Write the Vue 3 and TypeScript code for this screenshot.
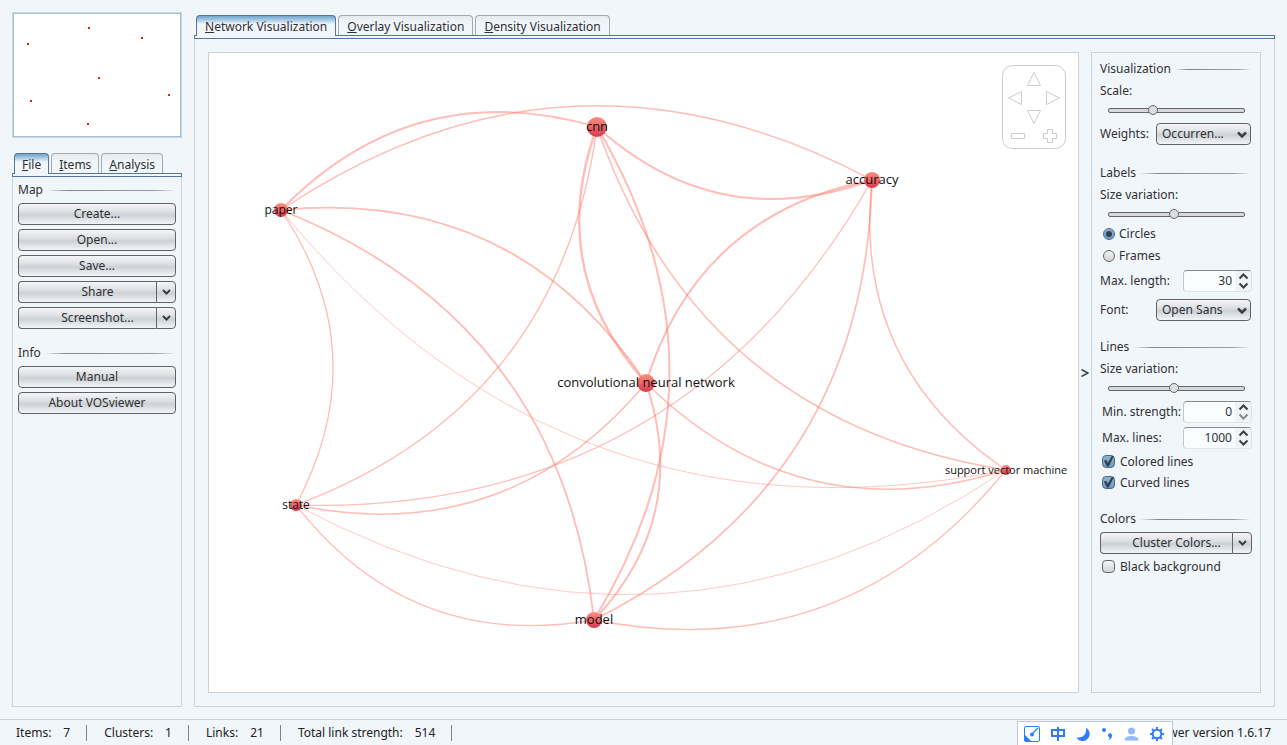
<script setup lang="ts">
import { ref } from 'vue'

interface MapNode { id: string; label: string; x: number; y: number; r: number; size: number }
interface MapLink { from: string; to: string; width: number }

const nodes: MapNode[] = [
  { id: 'paper', label: 'paper', x: 72, y: 157, r: 7, size: 12 },
  { id: 'state', label: 'state', x: 87, y: 452, r: 6, size: 12 },
  { id: 'svm', label: 'support vector machine', x: 797, y: 417, r: 5, size: 11 },
  { id: 'accuracy', label: 'accuracy', x: 663, y: 127, r: 8, size: 13 },
  { id: 'model', label: 'model', x: 385, y: 567, r: 8, size: 13 },
  { id: 'conv', label: 'convolutional neural network', x: 437, y: 330, r: 9, size: 13 },
  { id: 'cnn', label: 'cnn', x: 388, y: 74, r: 10, size: 13 },
]

const links: MapLink[] = [
  { from: 'paper', to: 'cnn', width: 1.8 },
  { from: 'paper', to: 'accuracy', width: 1.4 },
  { from: 'paper', to: 'state', width: 1.3 },
  { from: 'paper', to: 'conv', width: 1.8 },
  { from: 'paper', to: 'model', width: 1.8 },
  { from: 'svm', to: 'paper', width: 0.8 },
  { from: 'accuracy', to: 'cnn', width: 2 },
  { from: 'conv', to: 'cnn', width: 2.4 },
  { from: 'cnn', to: 'state', width: 1.4 },
  { from: 'cnn', to: 'model', width: 2 },
  { from: 'svm', to: 'cnn', width: 1.5 },
  { from: 'conv', to: 'accuracy', width: 2 },
  { from: 'accuracy', to: 'state', width: 1.2 },
  { from: 'accuracy', to: 'model', width: 1.7 },
  { from: 'svm', to: 'accuracy', width: 1.5 },
  { from: 'conv', to: 'state', width: 1.5 },
  { from: 'svm', to: 'conv', width: 1.6 },
  { from: 'conv', to: 'model', width: 2 },
  { from: 'model', to: 'state', width: 1.3 },
  { from: 'svm', to: 'state', width: 0.8 },
  { from: 'svm', to: 'model', width: 1.3 },
]

const byId = new Map(nodes.map((n) => [n.id, n]))

// Each link bows to the left of its direction of travel.
function curve(link: MapLink): string {
  const a = byId.get(link.from)!
  const b = byId.get(link.to)!
  const cx = (a.x + b.x) / 2 + 0.3 * (b.y - a.y)
  const cy = (a.y + b.y) / 2 - 0.3 * (b.x - a.x)
  return `M${a.x} ${a.y}Q${cx} ${cy} ${b.x} ${b.y}`
}

const overview = [
  [75, 14], [128, 24], [14, 30], [85, 64], [155, 81], [17, 87], [74, 110],
]

const mainTabs = ['Network Visualization', 'Overlay Visualization', 'Density Visualization']
const sideTabs = ['File', 'Items', 'Analysis']
const activeMain = ref(0)
const activeSide = ref(0)

const scale = ref(31)
const labelVariation = ref(48)
const lineVariation = ref(48)
const shape = ref('circles')
const maxLength = ref(30)
const minStrength = ref(0)
const maxLines = ref(1000)
const colored = ref(true)
const curved = ref(true)
const blackBackground = ref(false)

const stats = [
  ['Items:', '7'], ['Clusters:', '1'], ['Links:', '21'], ['Total link strength:', '514'],
]
</script>

<template>
  <div class="app">
    <div class="workspace">
      <aside class="side">
        <svg class="overview" viewBox="0 0 168 124" aria-label="Overview">
          <rect v-for="(p, i) in overview" :key="i" :x="p[0]" :y="p[1]" width="2" height="2" fill="#d22" />
        </svg>
        <div class="tabs side-tabs" role="tablist">
          <button v-for="(t, i) in sideTabs" :key="t" class="tab" :class="{ active: activeSide === i }" role="tab"
            :aria-selected="activeSide === i" @click="activeSide = i"><u>{{ t[0] }}</u>{{ t.slice(1) }}</button>
        </div>
        <div class="pane side-pane">
          <h2 class="heading">Map</h2>
          <div class="stack">
            <button class="btn">Create...</button>
            <button class="btn">Open...</button>
            <button class="btn">Save...</button>
            <div class="split">
              <button class="btn">Share</button>
              <button class="btn drop" aria-label="Share options">
                <svg width="9" height="6" viewBox="0 0 9 6"><path d="M1 1l3.5 3.5L8 1" /></svg>
              </button>
            </div>
            <div class="split">
              <button class="btn">Screenshot...</button>
              <button class="btn drop" aria-label="Screenshot options">
                <svg width="9" height="6" viewBox="0 0 9 6"><path d="M1 1l3.5 3.5L8 1" /></svg>
              </button>
            </div>
          </div>
          <h2 class="heading later">Info</h2>
          <div class="stack">
            <button class="btn">Manual</button>
            <button class="btn">About VOSviewer</button>
          </div>
        </div>
      </aside>

      <main class="main">
        <div class="tabs main-tabs" role="tablist">
          <button v-for="(t, i) in mainTabs" :key="t" class="tab" :class="{ active: activeMain === i }" role="tab"
            :aria-selected="activeMain === i" @click="activeMain = i"><u>{{ t[0] }}</u>{{ t.slice(1) }}</button>
        </div>
        <div class="pane main-pane">
          <section class="canvas">
            <svg class="map" viewBox="0 0 869 639">
              <defs>
                <linearGradient id="ball" x1="0" y1="0" x2="0" y2="1">
                  <stop offset="0" stop-color="#ff8f82" />
                  <stop offset="1" stop-color="#d63a4c" />
                </linearGradient>
              </defs>
              <path v-for="l in links" :key="l.from + l.to" class="link" :d="curve(l)" :stroke-width="l.width" />
              <circle v-for="n in nodes" :key="n.id" :cx="n.x" :cy="n.y" :r="n.r" fill="url(#ball)" />
              <text v-for="n in nodes" :key="n.id + 't'" class="label" :x="n.x" :y="n.y + 4" :font-size="n.size">{{ n.label }}</text>
            </svg>
            <svg class="navigator" width="64" height="84" viewBox="0 0 64 84" aria-label="Navigation">
              <rect x="0.5" y="0.5" width="63" height="83" rx="10" />
              <path d="M32 7.500L38.500 20.500H25.500Z" />
              <path d="M6.500 33L19.500 26.500V39.500Z" />
              <path d="M57.500 33L44.500 26.500V39.500Z" />
              <path d="M32 58.500L25.500 45.500H38.500Z" />
              <path d="M9.500 68.500H22.500V73.500H9.500Z" />
              <path d="M45.500 64.500H50.500V68.500H54.500V73.500H50.500V77.500H45.500V73.500H41.500V68.500H45.500Z" />
            </svg>
          </section>
          <button class="collapse" aria-label="Collapse options">
            <svg width="8" height="8" viewBox="0 0 8 8"><path d="M0.500 0.500L7 4L0.500 7.500" /></svg>
          </button>
          <section class="options">
            <h2 class="heading">Visualization</h2>
            <label class="line" for="scale">Scale:</label>
            <input id="scale" v-model="scale" class="slider" type="range" />
            <div class="row">
              <label for="weights">Weights:</label>
              <span class="select">
                <select id="weights"><option>Occurren...</option></select>
                <svg width="12" height="8" viewBox="0 0 12 8"><path d="M2 1.500L6 5.500L10 1.500" /></svg>
              </span>
            </div>

            <h2 class="heading labels-heading">Labels</h2>
            <label class="line" for="label-size">Size variation:</label>
            <input id="label-size" v-model="labelVariation" class="slider" type="range" />
            <label class="check radio"><input v-model="shape" type="radio" name="shape" value="circles" />Circles</label>
            <label class="check radio"><input v-model="shape" type="radio" name="shape" value="frames" />Frames</label>
            <div class="row length-row">
              <label for="max-length">Max. length:</label>
              <span class="spinner">
                <input id="max-length" v-model="maxLength" type="number" />
                <span class="steps">
                  <button aria-label="Increase length" @click="maxLength++"><svg width="11" height="7" viewBox="0 0 11 7"><path d="M1.500 5.500l4-4 4 4" /></svg></button>
                  <button aria-label="Decrease length" @click="maxLength--"><svg width="11" height="7" viewBox="0 0 11 7"><path d="M1.500 1.500l4 4 4-4" /></svg></button>
                </span>
              </span>
            </div>
            <div class="row font-row">
              <label for="font">Font:</label>
              <span class="select">
                <select id="font"><option>Open Sans</option></select>
                <svg width="12" height="8" viewBox="0 0 12 8"><path d="M2 1.500L6 5.500L10 1.500" /></svg>
              </span>
            </div>

            <h2 class="heading later">Lines</h2>
            <label class="line" for="line-size">Size variation:</label>
            <input id="line-size" v-model="lineVariation" class="slider" type="range" />
            <div class="row indent">
              <label for="min-strength">Min. strength:</label>
              <span class="spinner">
                <input id="min-strength" v-model="minStrength" type="number" />
                <span class="steps">
                  <button aria-label="Increase strength" @click="minStrength++"><svg width="11" height="7" viewBox="0 0 11 7"><path d="M1.500 5.500l4-4 4 4" /></svg></button>
                  <button aria-label="Decrease strength" :disabled="minStrength === 0" @click="minStrength--"><svg width="11" height="7" viewBox="0 0 11 7"><path d="M1.500 1.500l4 4 4-4" /></svg></button>
                </span>
              </span>
            </div>
            <div class="row indent">
              <label for="max-lines">Max. lines:</label>
              <span class="spinner">
                <input id="max-lines" v-model="maxLines" type="number" />
                <span class="steps">
                  <button aria-label="Increase lines" @click="maxLines++"><svg width="11" height="7" viewBox="0 0 11 7"><path d="M1.500 5.500l4-4 4 4" /></svg></button>
                  <button aria-label="Decrease lines" @click="maxLines--"><svg width="11" height="7" viewBox="0 0 11 7"><path d="M1.500 1.500l4 4 4-4" /></svg></button>
                </span>
              </span>
            </div>
            <div class="checks">
              <label class="check"><input v-model="colored" type="checkbox" />Colored lines</label>
              <label class="check"><input v-model="curved" type="checkbox" />Curved lines</label>
            </div>

            <h2 class="heading later">Colors</h2>
            <div class="split cluster">
              <button class="btn">Cluster Colors...</button>
              <button class="btn drop" aria-label="Cluster color options">
                <svg width="9" height="6" viewBox="0 0 9 6"><path d="M1 1l3.500 3.500L8 1" /></svg>
              </button>
            </div>
            <label class="check"><input v-model="blackBackground" type="checkbox" />Black background</label>
          </section>
        </div>
      </main>
    </div>

    <footer class="status">
      <span v-for="s in stats" :key="s[0]" class="stat"><span>{{ s[0] }}</span><span>{{ s[1] }}</span></span>
      <span class="version">VOSviewer version 1.6.17</span>
      <div class="ime" aria-label="Input method">
        <svg width="16" height="16" viewBox="0 0 16 16">
          <rect x="0.500" y="0.500" width="15" height="15" rx="1.500" fill="#fff" stroke="#2f7bff" />
          <path d="M0.500 8.500L7.500 15.500H2C1 15.500 0.500 15 0.500 14Z" fill="#2f7bff" />
          <path d="M8 8L14 2" stroke="#2f7bff" stroke-width="1.200" />
          <circle cx="8" cy="8.500" r="2" fill="#2f7bff" />
        </svg>
        <svg width="16" height="16" viewBox="0 0 16 16" fill="none" stroke="#2f7bff" stroke-width="2">
          <path d="M3 4H15V10H3ZM9 1V15" />
        </svg>
        <svg width="16" height="16" viewBox="0 0 16 16">
          <path d="M12 1.500C17 5 16.500 11 13 13.500C9.500 16 5 15.500 2.500 11.500C9 12 13 8 12 1.500Z" fill="#2f7bff" />
        </svg>
        <svg width="16" height="16" viewBox="0 0 16 16" fill="#2f7bff">
          <circle cx="5" cy="4" r="2" />
          <path d="M9 9A2 2 0 1 1 13 9.500C13 12 11.500 13.500 9 14.500C10 13.500 11 12.500 10.500 11.200C9.500 11 9 10 9 9Z" />
        </svg>
        <svg width="16" height="16" viewBox="0 0 16 16" fill="#94b9ff">
          <circle cx="7.500" cy="5" r="3.500" />
          <path d="M0.500 14.500C0.500 11 4 10 7.500 10S14.500 11 14.500 14.500Z" />
        </svg>
        <svg width="16" height="16" viewBox="0 0 16 16" fill="none" stroke="#2f7bff">
          <circle cx="8" cy="8" r="4.300" stroke-width="2" />
          <path stroke-width="2" d="M8 1V4M8 12V15M1 8H4M12 8H15M3 3L5 5M11 11L13 13M13 3L11 5M5 11L3 13" />
        </svg>
      </div>
    </footer>
  </div>
</template>

<style>
html, body { margin: 0; background: #f0f6fa; }
</style>

<style scoped>
.app {
  display: flex;
  flex-direction: column;
  height: 100vh;
  min-height: 640px;
  overflow: hidden;
  background: #f0f6fa;
  color: #303034;
  font: 12px/16px "Noto Sans", "Open Sans", sans-serif;
}
.app *, .app *::before { box-sizing: border-box; }
button, input, select { font: inherit; color: inherit; margin: 0; }
.workspace { flex: 1; display: flex; gap: 12px; padding: 12px; min-height: 0; }
.side { width: 170px; flex: none; display: flex; flex-direction: column; }
.overview {
  display: block;
  width: 100%;
  flex: none;
  background: #fff;
  border: 1px solid #c9d6e0;
  box-shadow: inset 0 0 0 1px #a3c2d8;
}
.tabs { display: flex; gap: 2px; padding-left: 2px; flex: none; }
.side-tabs { margin-top: 15px; }
.main-tabs { margin-top: 3px; }
.tab {
  height: 20px;
  padding: 1px 8px 0;
  border: 1px solid #a5aaae;
  border-bottom: 0;
  border-radius: 4px 4px 0 0;
  background: linear-gradient(#e6ebef, #f0f6fa 8px);
  line-height: 20px;
  white-space: nowrap;
}
.side-tabs .tab { padding: 1px 7px 0; }
.tab.active {
  position: relative;
  z-index: 1;
  height: 21px;
  margin-bottom: -1px;
  border-color: #56749c;
  background: linear-gradient(#6fa5cd, #b9d5e9 5px, #f0f6fa 8px);
}
.pane { flex: 1; min-height: 0; border: 1px solid #c8d2da; border-top: 0; }
.pane::before {
  content: "";
  display: block;
  height: 4px;
  border: 1px solid #56749c;
}
.side-pane { padding: 0 5px; }
.side-pane::before { margin: 0 -6px 2px; }
.heading {
  display: flex;
  align-items: center;
  height: 22px;
  margin: 0;
  font: inherit;
  gap: 4px;
}
.heading::after {
  content: "";
  flex: 1;
  height: 1px;
  background: linear-gradient(90deg, transparent, #84888c 16%, #9a9ea2 84%, transparent);
}
.stack { display: flex; flex-direction: column; gap: 4px; margin-top: 2px; }
.side-pane .later { margin-top: 13px; }
.btn {
  height: 22px;
  padding: 0 4px;
  border: 1px solid #606266;
  border-radius: 4px;
  background: linear-gradient(#f4f6f8, #dddfe3 40%, #cdd0d5 55%, #f2f5f8);
  line-height: 18px;
}
.split { display: flex; }
.split .btn:first-child { flex: 1; border-radius: 4px 0 0 4px; padding-left: 24px; border-right: 0; }
.split .drop { width: 20px; padding: 0; border-radius: 0 4px 4px 0; display: grid; place-items: center; }
.drop path, .select path, .steps path, .collapse path { fill: none; stroke: #3c3e42; stroke-width: 2; }
.collapse path { stroke-width: 1.5; }

.main { flex: 1; min-width: 0; display: flex; flex-direction: column; }
.main-pane { display: grid; grid-template-columns: 1fr 12px 170px; grid-template-rows: 4px 1fr; padding: 0 13px 13px; row-gap: 13px; }
.main-pane::before { grid-column: 1 / -1; margin: 0 -14px; }
.canvas { position: relative; min-width: 0; min-height: 0; background: #fff; border: 1px solid #c8d4dc; }
.map { display: block; width: 100%; height: 100%; }
.link { fill: none; stroke: #ff7b6e; stroke-opacity: 0.5; }
.label { font-family: "Open Sans", sans-serif; text-anchor: middle; fill: #111; }
.navigator { position: absolute; top: 12px; right: 12px; fill: none; stroke: #ccc; }
.collapse { align-self: center; width: 12px; height: 16px; padding: 0; border: 0; background: none; display: grid; place-items: center; }
.options { border: 1px solid #c8d4dc; padding: 5px 9px 0 8px; overflow: hidden; }
.options > .later { margin-top: 15px; }
.labels-heading { margin-top: 17px; }
.line { display: block; height: 21px; line-height: 21px; }
.row { display: flex; align-items: center; justify-content: space-between; height: 22px; margin-top: 4px; white-space: nowrap; }
.length-row { margin-top: 3px; }
.font-row { margin-top: 7px; }
.indent { padding-left: 2px; }

.slider {
  appearance: none;
  display: block;
  width: 137px;
  height: 18px;
  margin-left: 8px;
  background: none;
}
.slider::-webkit-slider-runnable-track {
  height: 5px;
  border: 1px solid #66686c;
  border-radius: 2px;
  background: #d6d8dd;
}
.slider::-webkit-slider-thumb {
  appearance: none;
  width: 10px;
  height: 10px;
  box-sizing: border-box;
  margin-top: -4px;
  border: 1px solid #66686c;
  border-radius: 50%;
  background: #dcdee2;
}

.select { position: relative; width: 95px; }
.select select {
  appearance: none;
  display: block;
  width: 100%;
  height: 22px;
  padding: 0 18px 1px 5px;
  border: 1px solid #606266;
  border-radius: 4px;
  background: linear-gradient(#f4f6f8, #dddfe3 40%, #cdd0d5 55%, #f2f5f8);
}
.select svg { position: absolute; right: 3px; top: 8px; pointer-events: none; }
.select path { stroke-width: 2.5; }

.spinner {
  display: flex;
  width: 69px;
  height: 22px;
  margin-right: -1px;
  border: 1px solid #dde3e8;
  border-top-color: #85898d;
  border-left-color: #c0c6cb;
  border-radius: 4px;
  background: #fafdff;
}
.spinner input {
  appearance: textfield;
  flex: 1;
  min-width: 0;
  padding: 0 3px 0 0;
  border: 0;
  background: none;
  text-align: right;
}
.spinner input::-webkit-inner-spin-button { appearance: none; }
.steps { width: 16px; display: flex; flex-direction: column; justify-content: center; gap: 2px; background: #eff3f6; border-radius: 0 4px 4px 0; }
.steps button { display: block; height: 7px; padding: 0 0 0 3px; border: 0; background: none; }
.steps svg { display: block; }
.steps button:disabled path { stroke: #88898c; }

.checks { margin-top: 2px; }
.check { display: flex; align-items: center; gap: 5px; height: 21px; padding-left: 2px; }
.check.radio { height: 22px; gap: 4px; }
.check input {
  appearance: none;
  width: 13px;
  height: 13px;
  border: 1px solid #66686c;
  border-radius: 4px;
  background: linear-gradient(#f4f5f7, #cfd2d7);
  display: grid;
  place-items: center;
}
.check input[type="radio"] { border-radius: 50%; width: 12px; height: 12px; margin-left: 1px; }
.check input:checked { border-color: #4a6c8e; background: linear-gradient(#8ab4d4, #6c9dc4); }
.check input[type="radio"]:checked::before { content: ""; width: 6px; height: 6px; border-radius: 50%; background: #36404c; }
.check input[type="checkbox"]:checked::before {
  content: "";
  width: 11px;
  height: 11px;
  background: #36404c;
  clip-path: polygon(8% 42%, 30% 36%, 44% 62%, 80% 0, 100% 0, 52% 96%, 36% 96%);
}
.cluster { margin: 2px -1px 2px 0; }

.status {
  position: relative;
  flex: none;
  display: flex;
  align-items: center;
  height: 26px;
  padding: 0 16px;
  border-top: 1px solid #c8d4dc;
  color: #222;
  white-space: nowrap;
}
.stat { display: flex; gap: 12px; padding-right: 16px; margin-right: 17px; border-right: 1px solid #808488; }
.version { margin-left: auto; }
.ime {
  position: absolute;
  top: 1px;
  right: 114px;
  width: 156px;
  height: 26px;
  display: flex;
  justify-content: space-between;
  padding: 4px 7px 0 6px;
  background: #fff;
  border: 1px solid #bcc8dc;
}
</style>
